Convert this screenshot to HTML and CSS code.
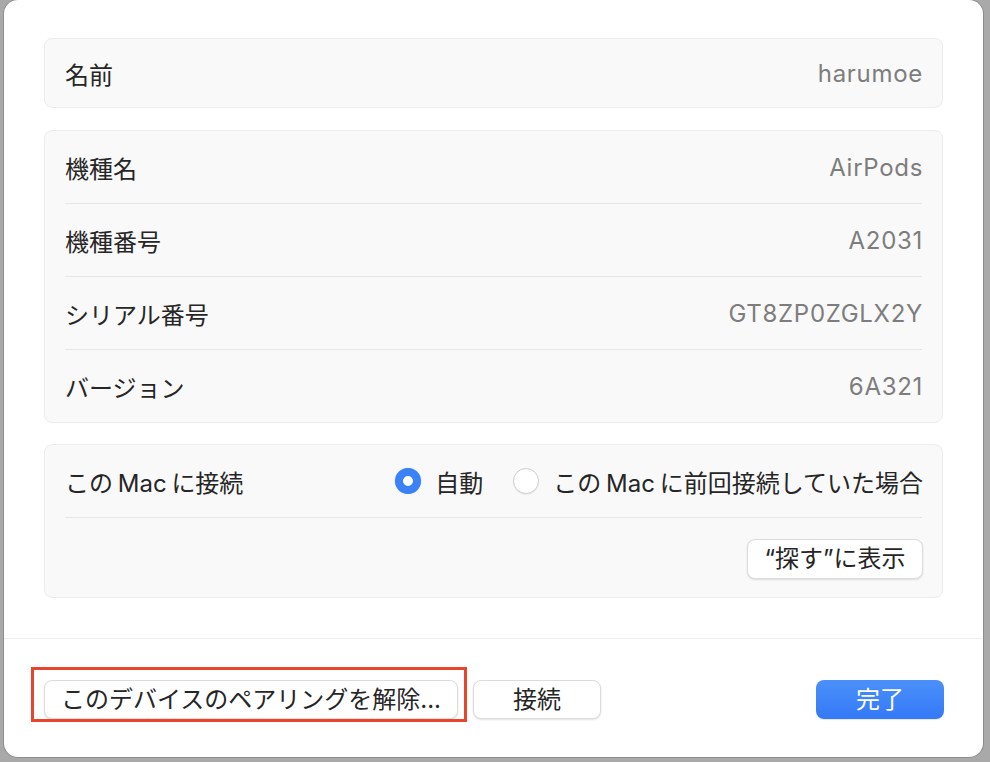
FILE: index.html
```html
<!DOCTYPE html>
<html lang="ja">
<head>
<meta charset="utf-8">
<title>AirPods</title>
<link rel="stylesheet" href="styles.css">
</head>
<body>
<div class="window">
  <div class="content">
    <section class="card">
      <div class="row"><span class="label">名前</span><span class="value">harumoe</span></div>
    </section>
    <section class="card">
      <div class="row"><span class="label">機種名</span><span class="value">AirPods</span></div>
      <div class="row divided"><span class="label">機種番号</span><span class="value">A2031</span></div>
      <div class="row divided"><span class="label">シリアル番号</span><span class="value">GT8ZP0ZGLX2Y</span></div>
      <div class="row divided"><span class="label">バージョン</span><span class="value">6A321</span></div>
    </section>
    <section class="card last">
      <div class="row"><span class="label">この <span class="latin">Mac</span> に接続</span>
        <div class="radios">
          <label class="radio"><span class="dot checked"></span><span>自動</span></label>
          <label class="radio"><span class="dot"></span><span>この <span class="latin">Mac</span> に前回接続していた場合</span></label>
        </div>
      </div>
      <div class="row divided tall"><span></span><button class="btn small">“探す”に表示</button></div>
    </section>
  </div>
  <footer class="footer">
    <span class="highlight"><button class="btn wide">このデバイスのペアリングを解除...</button></span>
    <button class="btn">接続</button>
    <button class="btn primary">完了</button>
  </footer>
</div>
</body>
</html>
```
FILE: styles.css
```css
html, body {
  margin: 0;
  padding: 0;
}
body {
  width: 990px;
  height: 762px;
  overflow: hidden;
  background: #a9a9a9;
  font-family: Inter, "Noto Sans CJK JP", sans-serif;
  font-size: 24px;
  color: #262626;
}
.window {
  margin-left: 4px;
  width: 979px;
  height: 757px;
  background: #ffffff;
  border-radius: 14px;
  box-shadow: 0 0 0 1px #8d8d8d;
  display: flex;
  flex-direction: column;
}
.content {
  padding: 38px 40px 0 40px;
  display: flex;
  flex-direction: column;
  gap: 22px;
}
.card {
  background: #f9f9f9;
  border: 1px solid #ececec;
  border-radius: 8px;
}
.card.last {
  margin-top: -1px;
}
.row {
  margin: 0 20px 0 20px;
  height: 68px;
  display: flex;
  align-items: center;
  justify-content: space-between;
}
.card + .card .row {
  height: 72px;
}
.card + .card .row.divided {
  border-top: 1px solid #e6e6e6;
}
.card + .card .row.tall {
  height: 79px;
}
.label {
  color: #262626;
}
.latin {
  margin: 0 -2px;
}
.value {
  color: #7d7d7d;
  letter-spacing: 0.7px;
  margin-right: -1px;
}
.radios {
  display: flex;
  align-items: center;
  gap: 30px;
  margin-right: -1px;
}
.radio {
  display: flex;
  align-items: center;
  gap: 14px;
}
.dot {
  width: 26px;
  height: 26px;
  border-radius: 50%;
  box-sizing: border-box;
  background: #ffffff;
  border: 1px solid #cfcfcf;
  box-shadow: 0 1px 1px rgba(0,0,0,0.06);
}
.dot.checked {
  border: 8px solid #3b82f6;
  background: #ffffff;
  box-shadow: 0 0 1px rgba(59,130,246,0.5);
}
.btn {
  font-family: Inter, "Noto Sans CJK JP", sans-serif;
  font-size: 24px;
  color: #262626;
  background: #ffffff;
  border: 1px solid #dcdcdc;
  border-radius: 8px;
  box-shadow: 0 1px 2px rgba(0,0,0,0.12);
  height: 39px;
  width: 128px;
  padding: 0;
  line-height: 1;
}
.btn.small {
  width: 176px;
  height: 40px;
  margin-right: -1px;
  margin-top: 2px;
}
.btn.wide {
  width: 414px;
}
.btn.primary {
  margin-left: auto;
  color: #ffffff;
  border: none;
  background: linear-gradient(#4b90f9, #3479f6);
  box-shadow: 0 1px 1px rgba(0,0,0,0.1);
}
.footer {
  margin-top: auto;
  border-top: 1px solid #ededed;
  padding: 41px 39px 38px 40px;
  display: flex;
  align-items: center;
  gap: 15px;
}
.highlight {
  position: relative;
  display: flex;
}
.highlight::after {
  content: "";
  position: absolute;
  left: -13px;
  top: -13px;
  right: -9px;
  bottom: -3px;
  border: 3px solid #e8452c;
  pointer-events: none;
}
```
